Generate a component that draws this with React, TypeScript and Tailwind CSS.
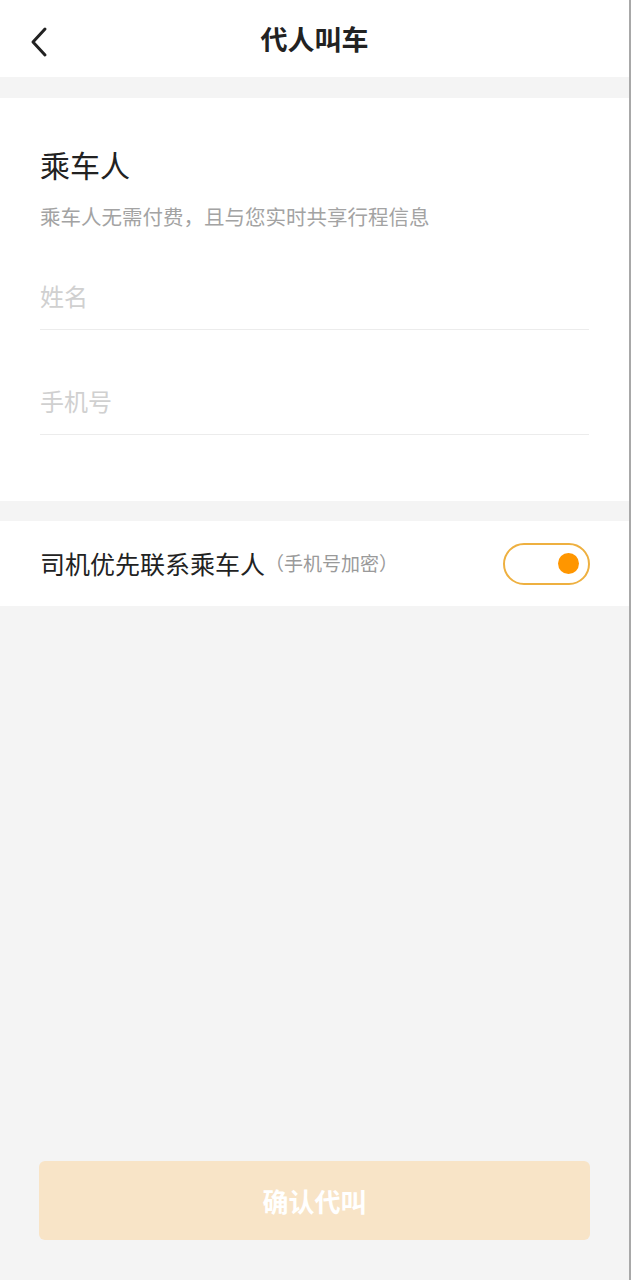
import React, { useState } from 'react';

const font = { fontFamily: '"Noto Sans CJK SC", "Noto Sans", sans-serif' };

export default function App() {
    const [contactRider, setContactRider] = useState(true);

    return (
        <div className="flex h-[1280px] w-[631px] flex-col bg-[#f4f4f4] border-r-2 border-[#a8a8a8]" style={font}>
            {/* Header */}
            <div className="relative flex h-[77px] items-center justify-center bg-white">
                <button className="absolute left-[24px] top-[22px] p-1">
                    <svg width="20" height="32" viewBox="0 0 20 32" fill="none">
                        <path d="M17 3 L5 16 L17 29" stroke="#222" strokeWidth="3" strokeLinecap="round" strokeLinejoin="round" />
                    </svg>
                </button>
                <h1 className="text-[27px] font-bold text-[#222] leading-none">代人叫车</h1>
            </div>

            {/* Passenger card */}
            <div className="mt-[21px] bg-white px-[40px] pt-[46px] pb-[66px]">
                <h2 className="text-[30px] leading-[40px] text-[#222]">乘车人</h2>
                <p className="mt-[18px] text-[20.5px] leading-[28px] text-[#a3a3a3]">
                    乘车人无需付费，且与您实时共享行程信息
                </p>

                <div className="mt-[33px] flex h-[67px] items-center border-b border-[#ececec]">
                    <input
                        placeholder="姓名"
                        className="w-full bg-transparent text-[24px] text-[#222] outline-none placeholder:text-[#d0d0d0]"
                    />
                </div>
                <div className="mt-[38px] flex h-[67px] items-center border-b border-[#ececec]">
                    <input
                        placeholder="手机号"
                        className="w-full bg-transparent text-[24px] text-[#222] outline-none placeholder:text-[#d0d0d0]"
                    />
                </div>
            </div>

            {/* Contact preference */}
            <div className="mt-[20px] flex h-[85px] items-center justify-between bg-white pl-[40px] pr-[39px]">
                <div className="flex items-center">
                    <span className="text-[25px] text-[#222]">司机优先联系乘车人</span>
                    <span className="text-[19px] text-[#9a9a9a]">（手机号加密）</span>
                </div>
                <button
                    onClick={() => setContactRider(!contactRider)}
                    className={`flex h-[42px] w-[87px] items-center rounded-full border-2 border-[#eeb040] px-[9px] ${
                        contactRider ? 'justify-end' : 'justify-start'
                    }`}
                >
                    <span className="h-[21px] w-[21px] rounded-full bg-[#ff9600]" />
                </button>
            </div>

            <div className="flex-1" />

            {/* Confirm */}
            <div className="px-[39px] pb-[40px]">
                <button className="flex h-[79px] w-full items-center justify-center rounded-[6px] bg-[#f8e4c7] text-[26px] font-bold text-white">
                    确认代叫
                </button>
            </div>
        </div>
    );
}
